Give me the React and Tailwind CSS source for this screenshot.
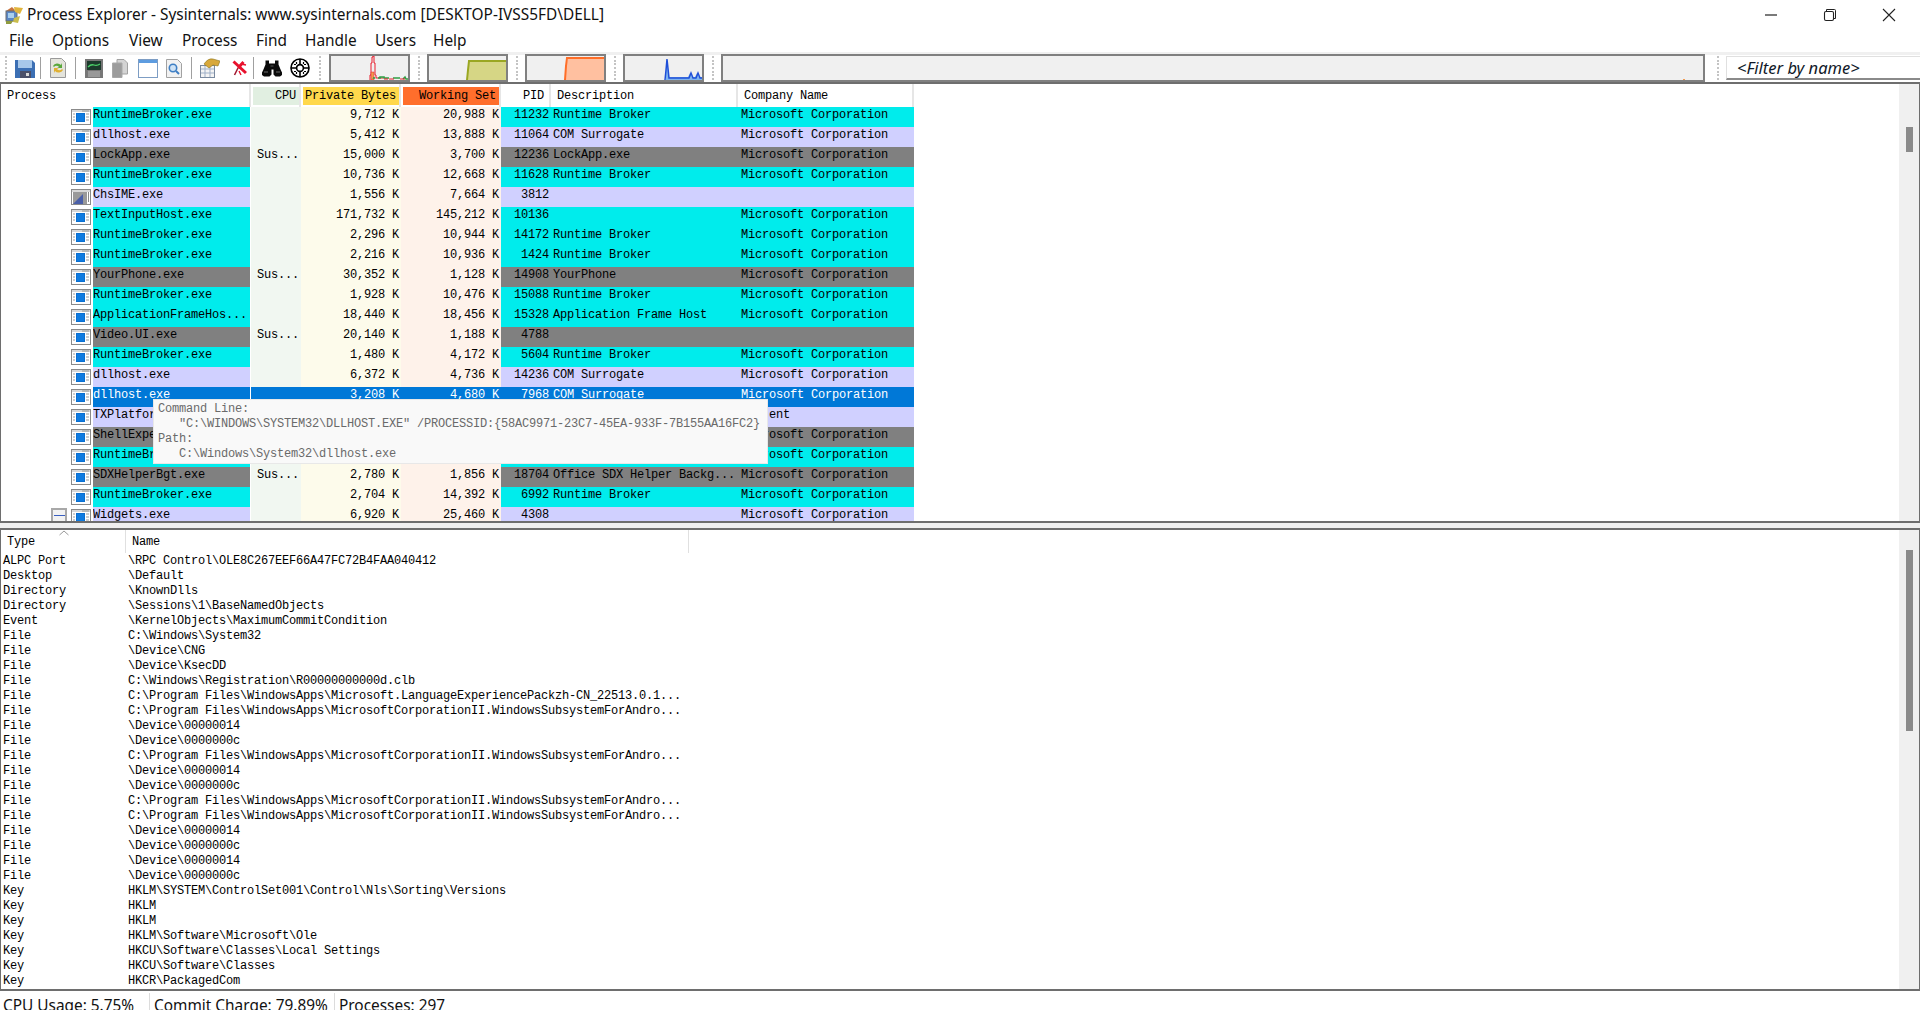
const MONO = "font-['Liberation_Mono',monospace]";

const rows = [
  ["RuntimeBroker.exe", "", "9,712 K", "20,988 K", "11232", "Runtime Broker", "Microsoft Corporation", "c"],
  ["dllhost.exe", "", "5,412 K", "13,888 K", "11064", "COM Surrogate", "Microsoft Corporation", "l"],
  ["LockApp.exe", "Sus...", "15,000 K", "3,700 K", "12236", "LockApp.exe", "Microsoft Corporation", "g"],
  ["RuntimeBroker.exe", "", "10,736 K", "12,668 K", "11628", "Runtime Broker", "Microsoft Corporation", "c"],
  ["ChsIME.exe", "", "1,556 K", "7,664 K", "3812", "", "", "l", "ime"],
  ["TextInputHost.exe", "", "171,732 K", "145,212 K", "10136", "", "Microsoft Corporation", "c"],
  ["RuntimeBroker.exe", "", "2,296 K", "10,944 K", "14172", "Runtime Broker", "Microsoft Corporation", "c"],
  ["RuntimeBroker.exe", "", "2,216 K", "10,936 K", "1424", "Runtime Broker", "Microsoft Corporation", "c"],
  ["YourPhone.exe", "Sus...", "30,352 K", "1,128 K", "14908", "YourPhone", "Microsoft Corporation", "g"],
  ["RuntimeBroker.exe", "", "1,928 K", "10,476 K", "15088", "Runtime Broker", "Microsoft Corporation", "c"],
  ["ApplicationFrameHos...", "", "18,440 K", "18,456 K", "15328", "Application Frame Host", "Microsoft Corporation", "c"],
  ["Video.UI.exe", "Sus...", "20,140 K", "1,188 K", "4788", "", "", "g"],
  ["RuntimeBroker.exe", "", "1,480 K", "4,172 K", "5604", "Runtime Broker", "Microsoft Corporation", "c"],
  ["dllhost.exe", "", "6,372 K", "4,736 K", "14236", "COM Surrogate", "Microsoft Corporation", "l"],
  ["dllhost.exe", "", "3,208 K", "4,680 K", "7968", "COM Surrogate", "Microsoft Corporation", "s"],
  ["TXPlatform.exe", "", "", "", "", "", "    ent", "l"],
  ["ShellExperienceHost.exe", "", "", "", "", "", "Microsoft Corporation", "g"],
  ["RuntimeBroker.exe", "", "", "", "", "", "Microsoft Corporation", "c"],
  ["SDXHelperBgt.exe", "Sus...", "2,780 K", "1,856 K", "18704", "Office SDX Helper Backg...", "Microsoft Corporation", "g"],
  ["RuntimeBroker.exe", "", "2,704 K", "14,392 K", "6992", "Runtime Broker", "Microsoft Corporation", "c"],
  ["Widgets.exe", "", "6,920 K", "25,460 K", "4308", "", "Microsoft Corporation", "l", "tree"],
];

const rowBg = { c: "bg-[#00ecec]", l: "bg-[#d0d0ff]", g: "bg-[#808080]", s: "bg-[#0078d7] text-white" };

const handles = [
  ["ALPC Port", "\\RPC Control\\OLE8C267EEF66A47FC72B4FAA040412"],
  ["Desktop", "\\Default"],
  ["Directory", "\\KnownDlls"],
  ["Directory", "\\Sessions\\1\\BaseNamedObjects"],
  ["Event", "\\KernelObjects\\MaximumCommitCondition"],
  ["File", "C:\\Windows\\System32"],
  ["File", "\\Device\\CNG"],
  ["File", "\\Device\\KsecDD"],
  ["File", "C:\\Windows\\Registration\\R00000000000d.clb"],
  ["File", "C:\\Program Files\\WindowsApps\\Microsoft.LanguageExperiencePackzh-CN_22513.0.1..."],
  ["File", "C:\\Program Files\\WindowsApps\\MicrosoftCorporationII.WindowsSubsystemForAndro..."],
  ["File", "\\Device\\00000014"],
  ["File", "\\Device\\0000000c"],
  ["File", "C:\\Program Files\\WindowsApps\\MicrosoftCorporationII.WindowsSubsystemForAndro..."],
  ["File", "\\Device\\00000014"],
  ["File", "\\Device\\0000000c"],
  ["File", "C:\\Program Files\\WindowsApps\\MicrosoftCorporationII.WindowsSubsystemForAndro..."],
  ["File", "C:\\Program Files\\WindowsApps\\MicrosoftCorporationII.WindowsSubsystemForAndro..."],
  ["File", "\\Device\\00000014"],
  ["File", "\\Device\\0000000c"],
  ["File", "\\Device\\00000014"],
  ["File", "\\Device\\0000000c"],
  ["Key", "HKLM\\SYSTEM\\ControlSet001\\Control\\Nls\\Sorting\\Versions"],
  ["Key", "HKLM"],
  ["Key", "HKLM"],
  ["Key", "HKLM\\Software\\Microsoft\\Ole"],
  ["Key", "HKCU\\Software\\Classes\\Local Settings"],
  ["Key", "HKCU\\Software\\Classes"],
  ["Key", "HKCR\\PackagedCom"],
];

function ProcIcon({ ime }) {
  return (
    <svg width="20" height="16" viewBox="0 0 20 16" className="shrink-0">
      <rect x="0.5" y="0.5" width="19" height="15" fill="#fff" stroke="#8a8a8a" />
      <rect x="1" y="1" width="18" height="2" fill="#d8d8d8" />
      {ime ? (
        <>
          <rect x="2" y="3" width="14" height="12" fill="#9a9a9a" />
          <path d="M2 15 L12 5 V15 Z" fill="#4a5fa8" />
          <rect x="17" y="3" width="1" height="10" fill="#888" />
        </>
      ) : (
        <>
          <rect x="5" y="4" width="9" height="9" fill="#0a6fd0" />
          <rect x="6" y="5" width="7" height="7" fill="#0f7be0" />
          <path d="M2 5h2M2 8h2M2 11h2M15 5h3M15 8h3M15 11h3M11 2h7" stroke="#9a9a9a" strokeWidth="1" />
        </>
      )}
    </svg>
  );
}

function Grip() {
  return (
    <div className="w-[5px] h-[26px] mx-[1px] flex flex-col justify-between py-[1px] shrink-0">
      {Array.from({ length: 7 }).map((_, i) => (
        <div key={i} className="w-[2px] h-[2px] bg-[#c4c4c4]" />
      ))}
    </div>
  );
}

function Sep() {
  return <div className="w-[1px] h-[22px] bg-[#a0a0a0] shrink-0" />;
}

function Graph({ children }) {
  return (
    <div className="w-[81px] h-[28px] border-2 border-[#808080] bg-[#f0f0f0] shrink-0 overflow-hidden">
      <svg width="77" height="24" viewBox="0 0 77 24" className="block">{children}</svg>
    </div>
  );
}

function TitleIcon() {
  return (
    <svg width="20" height="20" viewBox="0 0 20 20" className="shrink-0">
      <path d="M3 6 L9 2 L12 5 L7 10 Z" fill="#c8743c" />
      <rect x="3" y="6" width="11" height="10" fill="#5a87c6" stroke="#6d6d6d" />
      <rect x="5" y="8" width="6" height="5" fill="#a9d0ee" />
      <path d="M11 2 L20 3 L17 9 L12 7 Z" fill="#e1b53c" />
      <path d="M11 13 L17 11 L15 18 L10 17 Z" fill="#c9bc4c" />
      <path d="M3 16 L10 16 L8 19 L3 19 Z" fill="#8f9b3f" />
    </svg>
  );
}

function Toolbar() {
  return (
    <div className="h-[30px] flex flex-col shrink-0 bg-white">
      <div className="h-[3px] bg-[#f0f0f0]" />
      <div className="h-[26px] flex items-center">
        <div className="w-[4px]" />
        <Grip />
        <div className="w-[4px]" />
        <svg width="20" height="19" viewBox="0 0 20 19" className="shrink-0">
          <path d="M0 1h17l3 3v15H0z" fill="#3c6fb4" />
          <rect x="3" y="1" width="14" height="8" fill="#a8c8ea" />
          <rect x="5" y="12" width="11" height="7" fill="#4a4f68" />
          <rect x="11" y="14" width="3" height="3" fill="#d8d8d8" />
        </svg>
        <div className="w-[5px]" />
        <Sep />
        <div className="w-[9px]" />
        <svg width="16" height="20" viewBox="0 0 16 20" className="shrink-0">
          <path d="M0.5 0.5h11l4 4v15H0.5z" fill="#e4e4dc" stroke="#9a9a9a" />
          <path d="M3 8 a5 5 0 0 1 8-1 l1-2 v5 h-5 l2-1 a3 3 0 0 0-5 0z" fill="#5aa83c" />
          <path d="M13 12 a5 5 0 0 1-8 1 l-1 2 v-5 h5 l-2 1 a3 3 0 0 0 5 0z" fill="#e0b030" />
        </svg>
        <div className="w-[9px]" />
        <Sep />
        <div className="w-[9px]" />
        <svg width="18" height="19" viewBox="0 0 18 19" className="shrink-0">
          <rect width="18" height="19" fill="#777" />
          <rect x="2" y="2" width="14" height="9" fill="#1c3a2c" />
          <path d="M3 8 Q6 5 9 6 T15 5" stroke="#4cd36a" strokeWidth="1.3" fill="none" />
          <path d="M3 13h12M3 15h12M3 17h12" stroke="#bbb" />
        </svg>
        <div className="w-[9px]" />
        <svg width="16" height="19" viewBox="0 0 16 19" className="shrink-0">
          <path d="M5 0.5h7l3.5 3.5v11H5z" fill="#d4d4d4" stroke="#a2a2a2" />
          <path d="M0.5 4h9.5v14.5H0.5z" fill="#9c9c9c" stroke="#a8a8a8" />
        </svg>
        <div className="w-[10px]" />
        <svg width="20" height="19" viewBox="0 0 20 19" className="shrink-0">
          <rect x="0.5" y="0.5" width="19" height="18" fill="#fff" stroke="#7d9dc4" />
          <rect x="1" y="1" width="18" height="3" fill="#5d9ce0" />
        </svg>
        <div className="w-[8px]" />
        <svg width="16" height="19" viewBox="0 0 16 19" className="shrink-0">
          <path d="M0.5 0.5h11l4 4v14H0.5z" fill="#f2f2f2" stroke="#a2a2a2" />
          <circle cx="7" cy="9" r="3.7" fill="#cfe3f6" stroke="#3f7fc4" strokeWidth="1.6" />
          <path d="M10 12l3 3" stroke="#3f7fc4" strokeWidth="2" />
        </svg>
        <div className="w-[9px]" />
        <Sep />
        <div className="w-[8px]" />
        <svg width="20" height="20" viewBox="0 0 20 20" className="shrink-0">
          <rect x="0.5" y="7.5" width="14" height="12" fill="#f4f4f4" stroke="#7a8aa0" />
          <path d="M1 11h13M1 15h13M5 8v11M10 8v11" stroke="#9fb0c8" />
          <path d="M4 6 Q8 0 13 1 L20 3 L18 8 L13 7 L9 10Z" fill="#d8a83a" stroke="#8a7320" strokeWidth="0.6" />
        </svg>
        <div className="w-[12px]" />
        <svg width="15" height="16" viewBox="0 0 15 16" className="shrink-0">
          <path d="M1.5 1.5L14 13M11.5 2L6 8" fill="none" stroke="#e8112d" strokeWidth="3" />
          <path d="M6 8L2.5 15" fill="none" stroke="#a01830" strokeWidth="1.6" />
          <path d="M9 4l5 1M7 11l2 4" fill="none" stroke="#e8112d" strokeWidth="1.4" />
        </svg>
        <div className="w-[6px]" />
        <Sep />
        <div className="w-[8px]" />
        <svg width="20" height="18" viewBox="0 0 20 18" className="shrink-0">
          <path d="M3.5 1.5h3.5v3h6v-3h3.5v4l2.5 6 1 2v2.5l-2 1.5h-4.5l-2-2v-5h-2v5l-2 2H2l-2-1.5V13.5l1-2 2.5-6z" fill="#0a0a0a" />
          <path d="M2 13h4M14 13h4" stroke="#6a6a6a" />
          <path d="M8.5 7h3" stroke="#555" />
        </svg>
        <div className="w-[8px]" />
        <svg width="20" height="20" viewBox="0 0 20 20" className="shrink-0">
          <circle cx="10" cy="10" r="9" fill="#fff" stroke="#000" strokeWidth="1.6" />
          <circle cx="10" cy="10" r="3.4" fill="#fff" stroke="#000" strokeWidth="1.6" />
          <path d="M10 1v5M10 14v5M1 10h5M14 10h5" stroke="#000" strokeWidth="1.6" />
          <path d="M4 6.5h2M4 13.5h2M14 6.5h2M14 13.5h2M6.5 4v2M13.5 4v2M6.5 14v2M13.5 14v2" stroke="#000" strokeWidth="1.2" />
        </svg>
        <div className="w-[8px]" />
        <Grip />
        <div className="w-[4px]" />
        <Graph>
          <path d="M39 24V19h1V7h1V1h1v-1h1V7h1V19h1V22h7" fill="none" stroke="#e81c2c" strokeWidth="1" />
          <path d="M40 24V16h3V24z" fill="#f09a50" stroke="#e81c2c" strokeWidth="0.5" />
          <path d="M42 23l1-2 1 2" fill="none" stroke="#2f9e44" />
          <path d="M47 22h2v-1h4v1h5 M62 22h7 M72 23l2-2 1 2h2" fill="none" stroke="#2f9e44" strokeWidth="1.6" />
          <path d="M53 23h4M58 23h5M69 23h5" fill="none" stroke="#e81c2c" strokeWidth="1.2" />
        </Graph>
        <div className="w-[7px]" />
        <Grip />
        <div className="w-[3px]" />
        <Graph>
          <path d="M38 24 L39 14 L40 4 H77 V24 Z" fill="#d6d685" />
          <path d="M38 24 L39 14 L40 5 H77" fill="none" stroke="#9aa722" strokeWidth="2" />
        </Graph>
        <div className="w-[7px]" />
        <Grip />
        <div className="w-[3px]" />
        <Graph>
          <path d="M38 24 L39 10 L41 2 H77 V24 Z" fill="#ffc0a0" />
          <path d="M38 24 L39 10 L40 2 H77" fill="none" stroke="#ff6e28" strokeWidth="2" />
        </Graph>
        <div className="w-[7px]" />
        <Grip />
        <div className="w-[3px]" />
        <Graph>
          <path d="M41 24V14L42 3L44 21H63L65 17L67 21H70L72 17L74 21H77V24z" fill="#7fb4ee" />
          <path d="M40 24L41 14L42 3L44 22H64L66 17L68 22H71L73 17L75 22H77" fill="none" stroke="#1f4fd8" strokeWidth="1.5" />
        </Graph>
        <div className="w-[7px]" />
        <Grip />
        <div className="w-[3px]" />
        <div className="flex-1 h-[28px] border-2 border-[#808080] bg-[#f0f0f0] relative">
          <div className="absolute right-[18px] bottom-0 w-[2px] h-[1px] bg-[#f09a50]" />
        </div>
        <div className="w-[11px]" />
        <Grip />
        <div className="w-[3px]" />
        <div className="w-[194px] h-[24px] bg-white border-b-2 border-[#8a8a8a] border-l border-l-[#e0e0e0] border-t border-t-[#e0e0e0] flex items-center pl-[10px] pt-[2px] italic font-['Noto_Sans',sans-serif] text-[16.5px] text-[#101828] shrink-0 whitespace-pre">
          &lt;Filter by name&gt;
        </div>
      </div>
    </div>
  );
}

function Head({ w, bg, right, children, pl = "pl-[6px]", pr = "pr-[3px]" }) {
  return (
    <div className={`shrink-0 h-[23px] flex items-center border-r-2 border-[#e6e6e6] ${bg ? "pl-[2px]" : ""}`} style={{ width: w }}>
      <div className={`flex-1 h-[18px] mt-[1px] flex items-center ${bg || ""} ${right ? `justify-end ${pr}` : pl} whitespace-pre`}>
        {children}
      </div>
    </div>
  );
}

function Cell({ w, right, children, className = "" }) {
  return (
    <div className={`shrink-0 h-[20px] leading-[16px] whitespace-pre overflow-hidden ${right ? "text-right pr-[2px]" : ""} ${className}`} style={{ width: w }}>
      {children}
    </div>
  );
}

function Row({ r }) {
  const [name, cpu, priv, ws, pid, desc, comp, k, kind] = r;
  const bg = rowBg[k];
  const sel = k === "s";
  return (
    <div className="flex h-[20px]">
      <div className="w-[50px] shrink-0 relative">
        {kind === "tree" && (
          <div className="absolute left-[50px] top-[1px] w-[16px] h-[15px] border-2 border-[#a8a8a8] bg-[#f2f2f2] flex items-center justify-center">
            <div className="w-[11px] h-[1px] bg-[#3a5fc0]" />
          </div>
        )}
      </div>
      <div className="w-[20px] shrink-0 flex items-start pt-[2px] ml-[20px]"><ProcIcon ime={kind === "ime"} /></div>
      <div className="w-[2px] shrink-0" />
      <Cell w={157} className={bg}>{name}</Cell>
      <Cell w={50} right className={sel ? "bg-[#0078d7] ml-[1px]" : "bg-[#f1f7f1] ml-[1px]"}>{cpu}</Cell>
      <Cell w={100} right className={sel ? "bg-[#0078d7] text-white" : "bg-[#fdfbeb]"}>{priv}</Cell>
      <Cell w={100} right className={sel ? "bg-[#0078d7] text-white" : "bg-[#fef2ea]"}>{ws}</Cell>
      <Cell w={50} right className={bg}>{pid}</Cell>
      <Cell w={187} className={`${bg} pl-[2px]`}>{desc}</Cell>
      <Cell w={176} className={`${bg} pl-[3px]`}>{comp}</Cell>
    </div>
  );
}

export default function App() {
  return (
    <div className="w-[1920px] h-[1010px] overflow-hidden flex flex-col bg-white text-black">
      {/* title bar */}
      <div className="h-[30px] shrink-0 flex items-center pl-[3px] font-['Noto_Sans',sans-serif] text-[15.4px] text-[#111]">
        <TitleIcon />
        <span className="ml-[4px] whitespace-pre">Process Explorer - Sysinternals: www.sysinternals.com [DESKTOP-IVSS5FD\DELL]</span>
        <div className="ml-auto flex items-center">
          <svg width="14" height="14" viewBox="0 0 14 14" className="mr-[45px]"><path d="M1 7h12" stroke="#222" strokeWidth="1.2" /></svg>
          <svg width="14" height="14" viewBox="0 0 14 14" className="mr-[45px]"><path d="M3.5 3V1.5h8a1 1 0 0 1 1 1v8H11" fill="none" stroke="#222" /><rect x="1.5" y="3.5" width="9" height="9" rx="1.5" fill="none" stroke="#222" strokeWidth="1.1" /></svg>
          <svg width="14" height="14" viewBox="0 0 14 14" className="mr-[24px]"><path d="M1 1l12 12M13 1L1 13" stroke="#222" strokeWidth="1.1" /></svg>
        </div>
      </div>
      {/* menu */}
      <div className="h-[22px] shrink-0 flex items-center pl-[9px] font-['Noto_Sans',sans-serif] text-[15.4px] text-[#111]">
        <span className="w-[43px]">File</span>
        <span className="w-[77px]">Options</span>
        <span className="w-[53px]">View</span>
        <span className="w-[74px]">Process</span>
        <span className="w-[49px]">Find</span>
        <span className="w-[70px]">Handle</span>
        <span className="w-[58px]">Users</span>
        <span>Help</span>
      </div>
      <Toolbar />
      {/* upper pane */}
      <div className={`h-[441px] shrink-0 border-t-2 border-b-2 border-l border-r border-[#6e6e6e] flex relative ${MONO} text-[12px] tracking-[-0.2px] overflow-hidden`}>
        <div className="flex-1 flex flex-col overflow-hidden">
          <div className="flex h-[23px] shrink-0">
            <div className="w-[250px] shrink-0 h-[23px] flex items-center pl-[6px] border-r-2 border-[#e6e6e6]">Process</div>
            <Head w={50} bg="bg-[#e1efe1]" right>CPU</Head>
            <Head w={100} bg="bg-[#ffd84c]" right>Private Bytes</Head>
            <Head w={100} bg="bg-[#ff6e2c]" right>Working Set</Head>
            <Head w={50} right pr="pr-[5px]">PID</Head>
            <Head w={187}>Description</Head>
            <Head w={176}>Company Name</Head>
          </div>
          <div className="overflow-hidden flex-1">
            {rows.map((r, i) => <Row key={i} r={r} />)}
          </div>
        </div>
        <div className="w-[20px] shrink-0 bg-[#f0f0f0] relative">
          <div className="absolute left-[7px] top-[43px] w-[7px] h-[25px] bg-[#8a8a8a]" />
        </div>
        <div className="absolute left-[152px] top-[315px] w-[615px] h-[65px] bg-[#f9f9f9] border border-[#e8e8e8] text-[#6a6a6a] pl-[4px] pt-[2px] leading-[15px] whitespace-pre">
          <div>Command Line:</div>
          <div>{'   "C:\\WINDOWS\\SYSTEM32\\DLLHOST.EXE" /PROCESSID:{58AC9971-23C7-45EA-933F-7B155AA16FC2}'}</div>
          <div>Path:</div>
          <div>{'   C:\\Windows\\System32\\dllhost.exe'}</div>
        </div>
      </div>
      <div className="h-[5px] shrink-0 bg-[#f0f0f0]" />
      {/* lower pane */}
      <div className={`h-[463px] shrink-0 border-t-2 border-b-2 border-l border-r border-[#6e6e6e] flex relative ${MONO} text-[12px] tracking-[-0.2px] overflow-hidden`}>
        <div className="flex-1 flex flex-col overflow-hidden">
          <div className="flex h-[23px] shrink-0 items-center">
            <div className="w-[125px] h-full flex items-center pl-[6px] border-r border-[#e0e0e0] shrink-0 relative">
              Type
              <svg width="10" height="6" viewBox="0 0 10 6" className="absolute left-[58px] top-0"><path d="M0.5 5L5 1l4.5 4" fill="none" stroke="#999" /></svg>
            </div>
            <div className="w-[563px] h-full flex items-center pl-[6px] border-r border-[#e0e0e0] shrink-0">Name</div>
          </div>
          <div className="leading-[15px] whitespace-pre overflow-hidden pt-[1px]">
            {handles.map(([t, n], i) => (
              <div key={i} className="flex h-[15px]">
                <div className="w-[127px] pl-[2px] shrink-0">{t}</div>
                <div>{n}</div>
              </div>
            ))}
          </div>
        </div>
        <div className="w-[20px] shrink-0 bg-[#f0f0f0] relative">
          <div className="absolute left-[7px] top-[20px] w-[7px] h-[181px] bg-[#8a8a8a]" />
        </div>
      </div>
      {/* status */}
      <div className="flex-1 overflow-hidden flex font-['Noto_Sans',sans-serif] text-[15.4px] text-[#111] leading-[22px]">
        <span className="w-[149px] pl-[3px] pt-[4px] shrink-0 whitespace-pre">CPU Usage: 5.75%</span>
        <div className="w-[1px] mt-[2px] bg-[#dcdcdc] shrink-0" />
        <span className="w-[184px] pl-[4px] pt-[4px] shrink-0 whitespace-pre">Commit Charge: 79.89%</span>
        <div className="w-[1px] mt-[2px] bg-[#dcdcdc] shrink-0" />
        <span className="pl-[4px] pt-[4px] whitespace-pre">Processes: 297</span>
      </div>
    </div>
  );
}
